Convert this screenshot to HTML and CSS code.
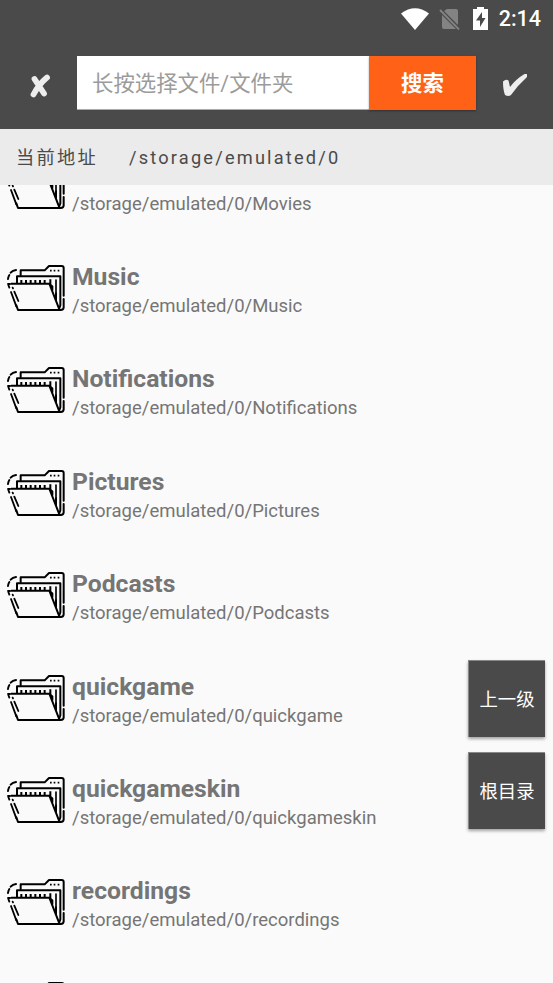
FILE: index.html
```html
<!DOCTYPE html>
<html lang="zh-CN">
<head>
<meta charset="utf-8">
<title>文件选择</title>
<link rel="stylesheet" href="styles.css">
</head>
<body>
<svg class="defs" width="0" height="0">
  <symbol id="folder" viewBox="18 27 180 144">
    <g fill="none" stroke="#000" stroke-width="6" stroke-linejoin="round" stroke-linecap="round">
      <path d="M24 72Q25 64 28 60M32 53Q38 46 48 45"/>
      <path d="M62 61V46H134L147 33H185Q191 33 191 39V122M191 132V157Q191 165 182 165H54L49 151"/>
      <path d="M51 84V64H181V151L177 162"/>
      <path d="M168 75V132" stroke-width="5"/>
      <path d="M64 75V84M78 75V84M92 75V84M106 75V84M120 75V84M134 75V84M151 73V88" stroke-linecap="butt"/>
      <path d="M34 86H148L178 163M148 86L157 94V106M168 115V136" stroke-linejoin="miter"/>
      <path d="M24 87L28 98M33 111L49 154M43 110L55 138M24 87H30M38 98L39 100" stroke-width="5.5"/>
      <path d="M150 47H155M161 47H166M173 47H178" stroke-width="5" stroke-linecap="butt"/>
    </g>
  </symbol>
</svg>
<div class="screen">
  <header class="header">
    <div class="status">
      <svg class="wifi" width="28" height="22" viewBox="0 0 28 22"><path d="M0 5.5Q14-5 28 5.5L14 22Z" fill="#fff"/></svg>
      <svg class="sim" width="21" height="22" viewBox="0 0 21 22"><path d="M8 1H17Q19 1 19 3V17L5 3ZM3 7L17 21H5Q3 21 3 19Z" fill="#838383"/><path d="M1 2L20 21.500" stroke="#838383" stroke-width="1.8"/></svg>
      <svg class="battery" width="15" height="23" viewBox="0 0 15 23"><path d="M4 0H11V2H15V23H0V2H4Z" fill="#fff"/><path d="M9 5L3 13.5H7V20L12.500 11H9Z" fill="#4a4a4a"/></svg>
      <span class="clock">2:14</span>
    </div>
    <div class="toolbar">
      <div class="action"><svg class="cross" width="20" height="24" viewBox="0 0 20 24"><path d="M4.500 5L14 19.500M17 3.500Q9 10 3.500 20.500" fill="none" stroke="#eee" stroke-width="5.800" stroke-linecap="round"/></svg></div>
      <div class="field">长按选择文件/文件夹</div>
      <div class="search">搜索</div>
      <div class="action"><svg class="check" width="26" height="24" viewBox="0 0 26 24"><path d="M1 8.500Q4 5.500 6.500 7.500L8 14Q14 6 22.500 1H25V4Q16 12 9 22Q6.500 24 3 22Q1 17 1 8.500Z" fill="#eee"/></svg></div>
    </div>
  </header>
  <div class="address"><span class="label">当前地址</span><span class="current">/storage/emulated/0</span></div>
  <main class="files">
    <div class="list">
      <div class="row"><svg class="icon"><use href="#folder"/></svg><div><div class="name"></div><div class="path">/storage/emulated/0/Movies</div></div></div>
      <div class="row"><svg class="icon"><use href="#folder"/></svg><div><div class="name">Music</div><div class="path">/storage/emulated/0/Music</div></div></div>
      <div class="row"><svg class="icon"><use href="#folder"/></svg><div><div class="name">Notifications</div><div class="path">/storage/emulated/0/Notifications</div></div></div>
      <div class="row"><svg class="icon"><use href="#folder"/></svg><div><div class="name">Pictures</div><div class="path">/storage/emulated/0/Pictures</div></div></div>
      <div class="row"><svg class="icon"><use href="#folder"/></svg><div><div class="name">Podcasts</div><div class="path">/storage/emulated/0/Podcasts</div></div></div>
      <div class="row"><svg class="icon"><use href="#folder"/></svg><div><div class="name">quickgame</div><div class="path">/storage/emulated/0/quickgame</div></div></div>
      <div class="row"><svg class="icon"><use href="#folder"/></svg><div><div class="name">quickgameskin</div><div class="path">/storage/emulated/0/quickgameskin</div></div></div>
      <div class="row"><svg class="icon"><use href="#folder"/></svg><div><div class="name">recordings</div><div class="path">/storage/emulated/0/recordings</div></div></div>
      <div class="row"><svg class="icon"><use href="#folder"/></svg></div>
    </div>
  </main>
  <nav class="floating"><div class="jump">上一级</div><div class="jump">根目录</div></nav>
</div>
</body>
</html>
```

FILE: styles.css
```css
* { box-sizing: border-box; }
body { margin: 0; font-family: Roboto, "Noto Sans CJK SC", sans-serif; }
.defs { position: absolute; }
.screen {
  position: relative;
  display: flex;
  flex-direction: column;
  width: 553px;
  height: 983px;
  overflow: hidden;
  background: #fafafa;
}
.header { height: 129px; flex: none; background: #4a4a4a; }
.status {
  display: flex;
  align-items: center;
  justify-content: flex-end;
  height: 37px;
  padding-right: 12px;
}
.wifi { margin-right: 1px; }
.sim { margin-left: 9px; }
.battery { margin-left: 13px; }
.clock {
  margin-left: 11px;
  color: #fff;
  font-size: 21.5px;
  font-weight: 500;
  line-height: 38px;
}
.toolbar { display: flex; height: 54px; margin-top: 19px; }
.action {
  display: flex;
  align-items: center;
  justify-content: center;
  width: 77px;
  padding-top: 6px;
}
.cross { margin-left: 2px; }
.check { margin-top: -2px; }
.field {
  width: 292px;
  height: 54px;
  padding-left: 15px;
  background: #fff;
  border-bottom: 1px solid #aaa;
  color: #9b9b9b;
  font-size: 21.4px;
  line-height: 56px;
  white-space: nowrap;
}
.search {
  width: 107px;
  background: #ff6116;
  box-shadow: 0 1px 2px rgba(0, 0, 0, .35);
  color: #fff;
  font-size: 21.4px;
  font-weight: 700;
  line-height: 55px;
  text-align: center;
}
.address {
  display: flex;
  flex: none;
  height: 56px;
  padding-left: 16px;
  background: #ebebeb;
  color: #4a4a4a;
  font-size: 18.2px;
  line-height: 58px;
  white-space: nowrap;
}
.label { width: 113px; letter-spacing: 2.3px; }
.current { letter-spacing: 2.2px; }
.files { flex: 1; min-height: 0; overflow: hidden; }
.list { margin-top: -23.4px; }
.row {
  display: flex;
  height: 102.4px;
  padding-left: 6px;
  color: #757575;
}
.icon { flex: none; width: 60px; height: 48px; margin-right: 6px; }
.name { height: 26px; font-size: 24.7px; font-weight: 700; line-height: 26px; }
.path { margin-top: 4px; font-size: 18.5px; line-height: 25px; }
.floating {
  position: absolute;
  top: 660px;
  right: 8px;
  display: flex;
  flex-direction: column;
  gap: 15px;
}
.jump {
  width: 77px;
  height: 77px;
  background: #4a4a4a;
  border: 1px solid #888;
  border-width: 1px 0 0 1px;
  box-shadow: 0 2px 3px rgba(0, 0, 0, .35);
  color: #fff;
  font-size: 18.4px;
  line-height: 77px;
  text-align: center;
}
```
